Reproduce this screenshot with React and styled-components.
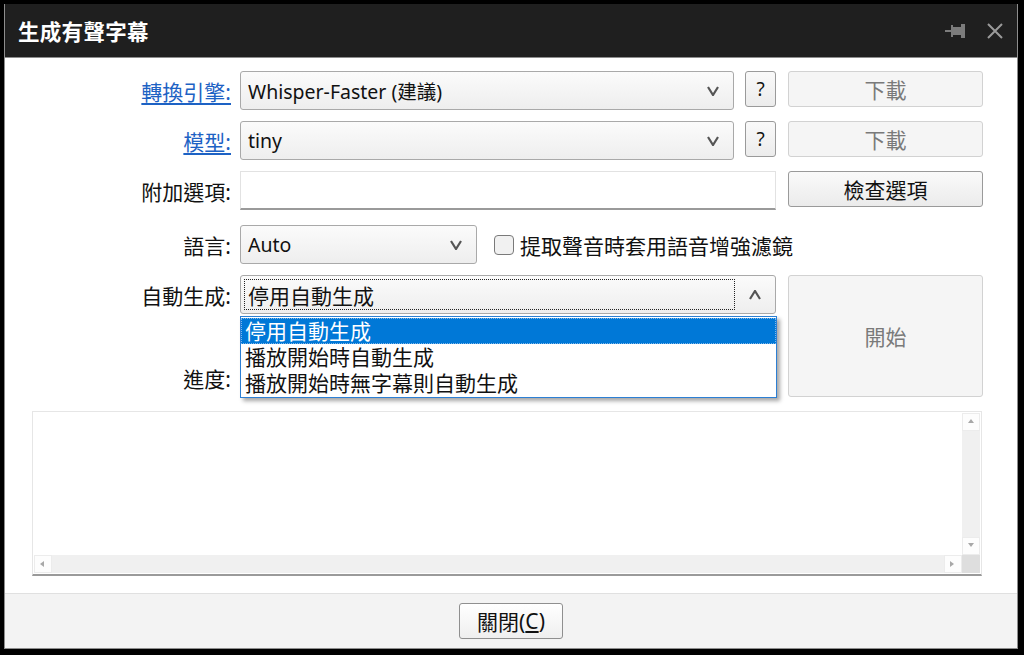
import styled, { createGlobalStyle } from "styled-components";

const GlobalStyle = createGlobalStyle`
  html, body {
    margin: 0;
    padding: 0;
    background: #000;
    overflow: hidden;
  }
  * {
    box-sizing: border-box;
  }
`;

const FONT = `"Segoe UI", "Noto Sans", "Noto Sans CJK TC", sans-serif`;

const Chevron = ({ up }) => (
  <svg width="12" height="10" viewBox="0 0 12 10">
    <polyline
      points={up ? "1,9 6,1 11,9" : "1,1 6,9 11,1"}
      fill="none"
      stroke="#555"
      strokeWidth="2.2"
    />
  </svg>
);

const PinIcon = () => (
  <svg width="22" height="18" viewBox="0 0 22 18">
    <rect x="0" y="8" width="7" height="2" fill="#7c7c7c" />
    <rect x="6" y="3" width="2" height="12" fill="#7c7c7c" />
    <rect x="8" y="5" width="8" height="8" fill="#7c7c7c" />
    <rect x="16" y="2" width="4" height="14" fill="#7c7c7c" />
  </svg>
);

const CloseIcon = () => (
  <svg width="16" height="16" viewBox="0 0 16 16">
    <path d="M1 1 L15 15 M15 1 L1 15" stroke="#9a9a9a" strokeWidth="2" />
  </svg>
);

const ScrollArrow = ({ dir }) => {
  const pts = {
    up: "1,5 4,1 7,5",
    down: "1,1 4,5 7,1",
    left: "5,1 1,4 5,7",
    right: "1,1 5,4 1,7",
  }[dir];
  return (
    <svg width="8" height="8" viewBox="0 0 8 8">
      <polygon points={pts} fill="#a8a8a8" />
    </svg>
  );
};

const Frame = styled.div`
  height: 655px;
  padding: 4px 6px 6px 4px;
`;

const Window = styled.div`
  height: 100%;
  display: flex;
  flex-direction: column;
  background: #fff;
  border-left: 1px solid #8d8d8d;
  border-right: 1px solid #8d8d8d;
  font-family: ${FONT};
  font-size: 21px;
  color: #111;
`;

const TitleBar = styled.div`
  height: 54px;
  flex-shrink: 0;
  background: #1f1f1f;
  border-bottom: 1px solid #8d8d8d;
  display: flex;
  align-items: center;
  padding: 0 14px 0 13px;
`;

const Title = styled.div`
  flex: 1;
  color: #fff;
  font-weight: bold;
  font-size: 21.5px;
  letter-spacing: 0.3px;
`;

const TitleButtons = styled.div`
  display: flex;
  align-items: center;
  gap: 20px;
`;

const Content = styled.div`
  flex: 1;
  display: flex;
  flex-direction: column;
  padding: 13px 35px 0 0;
`;

const Form = styled.div`
  display: grid;
  grid-template-columns: 223px 536px 195px;
  grid-template-rows: 39px 39px 43px 39px 39px 72px;
  column-gap: 12px;
  row-gap: 11px;
  align-items: start;
`;

const Label = styled.div`
  grid-column: 1;
  height: 39px;
  margin-right: -3px;
  display: flex;
  align-items: center;
  justify-content: flex-end;
  white-space: nowrap;
  align-self: ${(p) => (p.$bottom ? "end" : "start")};
`;

const LinkText = styled.a`
  color: #1d62c4;
  text-decoration: underline;
  text-underline-offset: 3px;
  cursor: pointer;
`;

const ControlLine = styled.div`
  grid-column: 2;
  display: flex;
  align-items: flex-start;
  gap: ${(p) => p.$gap || 11}px;
  position: relative;
`;

const Combo = styled.div`
  position: relative;
  width: ${(p) => p.$width}px;
  height: 39px;
  display: flex;
  align-items: center;
  padding: 0 14px 0 7px;
  border: 1px solid #a9a9a9;
  border-radius: 3px;
  background: linear-gradient(#fbfbfb, #eeeeee);
  flex-shrink: 0;
`;

const ComboText = styled.span`
  flex: 1;
  white-space: nowrap;
  font-size: 19.5px;
`;

const FocusBox = styled.span`
  flex: 1;
  align-self: stretch;
  margin: 3px 14px 3px -4px;
  padding-left: 3px;
  display: flex;
  align-items: center;
  border: 1px dotted #222;
  white-space: nowrap;
`;

const HelpButton = styled.div`
  width: 31px;
  height: 36px;
  display: flex;
  align-items: center;
  justify-content: center;
  border: 1px solid #9a9a9a;
  border-radius: 3px;
  background: linear-gradient(#f9f9f9, #ececec);
  font-size: 19px;
`;

const Button = styled.div`
  grid-column: 3;
  ${(p) => p.$rows && `grid-row: ${p.$rows};`}
  height: ${(p) => p.$height || 36}px;
  display: flex;
  align-items: center;
  justify-content: center;
  border: 1px solid ${(p) => (p.$disabled ? "#d2d2d2" : "#9a9a9a")};
  border-radius: 3px;
  background: ${(p) =>
    p.$disabled ? "#f5f5f5" : "linear-gradient(#fafafa, #ebebeb)"};
  color: ${(p) => (p.$disabled ? "#7a7a7a" : "#111")};
`;

const TextInput = styled.div`
  grid-column: 2;
  height: 39px;
  border: 1px solid #e2e2e2;
  border-bottom: 2px solid #9a9a9a;
  background: #fff;
`;

const CheckRow = styled.label`
  display: flex;
  align-items: center;
  gap: 6px;
  height: 39px;
  white-space: nowrap;
`;

const CheckBox = styled.span`
  width: 20px;
  height: 20px;
  border: 1.5px solid #7a7a7a;
  border-radius: 4px;
  background: #f1f1f1;
`;

const Dropdown = styled.div`
  position: absolute;
  top: 41px;
  left: 0;
  width: 537px;
  padding: 1px 0;
  border: 1px solid #2c7fd4;
  background: #fff;
  box-shadow: 3px 3px 4px rgba(0, 0, 0, 0.35);
  z-index: 5;
`;

const Option = styled.div`
  height: 26px;
  line-height: 26px;
  padding-left: 4px;
  white-space: nowrap;
  background: ${(p) => (p.$selected ? "#0078d7" : "transparent")};
  color: ${(p) => (p.$selected ? "#fff" : "#111")};
  outline: ${(p) => (p.$selected ? "1px dotted #7fb7ea" : "none")};
  outline-offset: -1px;
`;

const ProgressBar = styled.div`
  grid-column: 2;
  align-self: end;
  height: 30px;
  margin-bottom: 4px;
  border: 1px solid #bcbcbc;
  background: #e6e6e6;
`;

const LogBox = styled.div`
  margin: 14px 0 0 27px;
  width: 950px;
  height: 165px;
  display: grid;
  grid-template-columns: 1fr 18px;
  grid-template-rows: 1fr 18px;
  border: 1px solid #e6e6e6;
  border-bottom: 2px solid #9a9a9a;
  padding: 1px;
`;

const LogText = styled.div`
  background: #fff;
`;

const VScroll = styled.div`
  display: flex;
  flex-direction: column;
  justify-content: space-between;
  background: #f0f0f0;
`;

const HScroll = styled.div`
  display: flex;
  justify-content: space-between;
  background: #f0f0f0;
`;

const ScrollButton = styled.div`
  width: 18px;
  height: 18px;
  display: flex;
  align-items: center;
  justify-content: center;
  background: #fdfdfd;
  border: 1px solid #ececec;
`;

const Corner = styled.div`
  background: #dedede;
`;

const FooterWrap = styled.div`
  margin: auto -35px 0 0;
`;

const Footer = styled.div`
  height: 56px;
  display: flex;
  align-items: center;
  justify-content: center;
  background: #f3f3f3;
  border-top: 1px solid #e0e0e0;
  border-bottom: 1px solid #8d8d8d;
`;

const CloseButton = styled.div`
  width: 104px;
  height: 36px;
  display: flex;
  align-items: center;
  justify-content: center;
  border: 1px solid #8f8f8f;
  border-radius: 3px;
  background: linear-gradient(#ffffff, #efefef);
  u {
    text-underline-offset: 2px;
  }
`;

export default function App() {
  return (
    <Frame>
      <GlobalStyle />
      <Window>
        <TitleBar>
          <Title>生成有聲字幕</Title>
          <TitleButtons>
            <PinIcon />
            <CloseIcon />
          </TitleButtons>
        </TitleBar>
        <Content>
          <Form>
            <Label>
              <LinkText>轉換引擎:</LinkText>
            </Label>
            <ControlLine>
              <Combo $width={494}>
                <ComboText>Whisper-Faster (建議)</ComboText>
                <Chevron />
              </Combo>
              <HelpButton>?</HelpButton>
            </ControlLine>
            <Button $disabled>下載</Button>

            <Label>
              <LinkText>模型:</LinkText>
            </Label>
            <ControlLine>
              <Combo $width={494}>
                <ComboText>tiny</ComboText>
                <Chevron />
              </Combo>
              <HelpButton>?</HelpButton>
            </ControlLine>
            <Button $disabled>下載</Button>

            <Label>附加選項:</Label>
            <TextInput />
            <Button>檢查選項</Button>

            <Label>語言:</Label>
            <ControlLine $gap={17}>
              <Combo $width={237}>
                <ComboText>Auto</ComboText>
                <Chevron />
              </Combo>
              <CheckRow>
                <CheckBox />
                提取聲音時套用語音增強濾鏡
              </CheckRow>
            </ControlLine>

            <Label>自動生成:</Label>
            <ControlLine>
              <Combo $width={536}>
                <FocusBox>停用自動生成</FocusBox>
                <Chevron up />
              </Combo>
              <Dropdown>
                <Option $selected>停用自動生成</Option>
                <Option>播放開始時自動生成</Option>
                <Option>播放開始時無字幕則自動生成</Option>
              </Dropdown>
            </ControlLine>
            <Button $disabled $height={122} $rows="5 / span 2">
              開始
            </Button>

            <Label $bottom>進度:</Label>
            <ProgressBar />
          </Form>

          <LogBox>
            <LogText />
            <VScroll>
              <ScrollButton>
                <ScrollArrow dir="up" />
              </ScrollButton>
              <ScrollButton>
                <ScrollArrow dir="down" />
              </ScrollButton>
            </VScroll>
            <HScroll>
              <ScrollButton>
                <ScrollArrow dir="left" />
              </ScrollButton>
              <ScrollButton>
                <ScrollArrow dir="right" />
              </ScrollButton>
            </HScroll>
            <Corner />
          </LogBox>

          <FooterWrap>
            <Footer>
              <CloseButton>
                關閉(<u>C</u>)
              </CloseButton>
            </Footer>
          </FooterWrap>
        </Content>
      </Window>
    </Frame>
  );
}
